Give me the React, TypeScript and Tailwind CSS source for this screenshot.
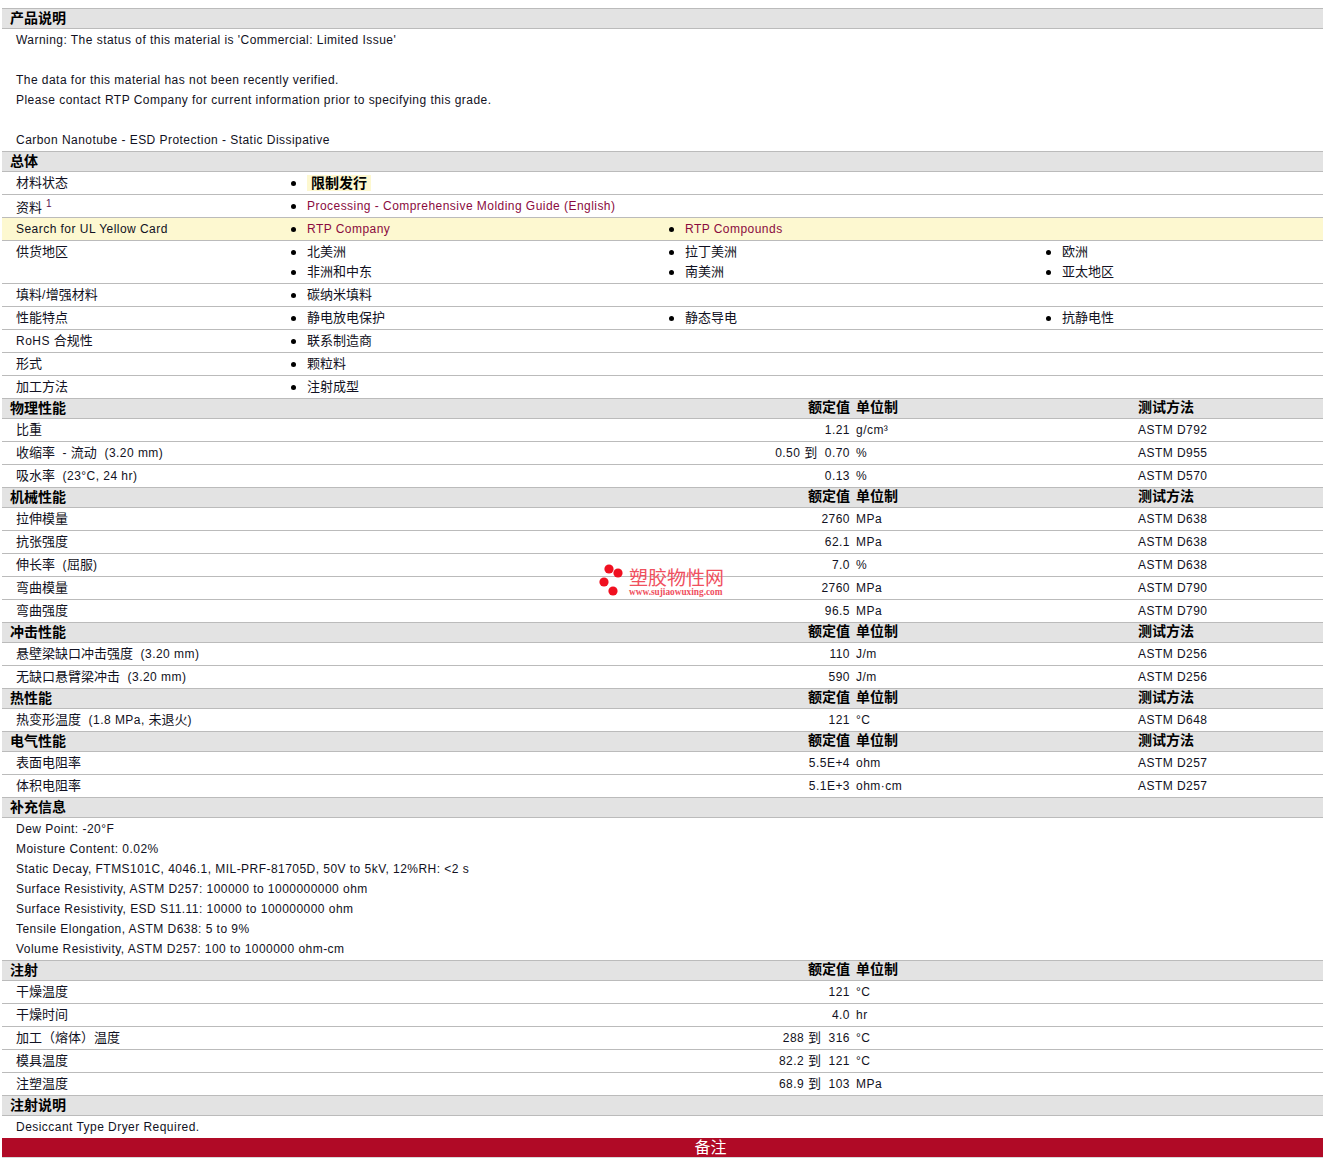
const font = "font-['Liberation_Sans','Noto_Sans_CJK_SC',sans-serif]";

// CJK runs are a touch larger than the latin text around them
const Txt = ({ text }: { text: string }) => (
  <>
    {text.split(/([\u3000-\u9fff\uff00-\uffef]+)/).map((part, i) =>
      i % 2 ? (
        <span key={i} className="text-[13px] tracking-normal">{part}</span>
      ) : (
        <span key={i}>{part}</span>
      )
    )}
  </>
);

const Header = ({ title, cols }: { title: string; cols?: boolean }) => (
  <div className="flex h-[20px] items-center border-b border-[#bbbbbb] bg-[#e3e3e3] text-[14px] font-bold text-black">
    <div className="flex-1 pb-[1px] pl-[8px]">{title}</div>
    {cols && (
      <>
        <div className="w-[200px] pb-[2px] text-right">额定值</div>
        <div className="w-[288px] pb-[2px] pl-[6px]">单位制</div>
        <div className="w-[185px] pb-[2px]">测试方法</div>
      </>
    )}
  </div>
);

const Lines = ({ lines }: { lines: string[] }) => (
  <div className="border-b border-[#bbbbbb] py-[1px] pl-[14px] tracking-[0.46px]">
    {lines.map((l, i) => (
      <div key={i} className="h-[20px] leading-[20px]">{l || "\u00a0"}</div>
    ))}
  </div>
);

const Item = ({ text, link }: { text: string; link?: boolean }) => (
  <div className="flex items-center">
    <span className="ml-[2px] mr-[11px] h-[5px] w-[5px] rounded-full bg-black" />
    <span className={link ? "text-[#8a0b3e]" : ""}><Txt text={text} /></span>
  </div>
);

const ListRow = ({ label, items, link, sup, yellow }: { label: string; items: string[]; link?: boolean; sup?: boolean; yellow?: boolean }) => (
  <div className={`grid h-[23px] grid-cols-[273px_378px_377px_1fr] items-center border-b border-[#bbbbbb] pl-[14px] tracking-[0.46px] ${yellow ? "bg-[#fdf8d0]" : ""}`}>
    <div className={sup ? "pt-[3px]" : ""}>
      <Txt text={label} />
      {sup && <sup className="ml-[4px] text-[10px] text-[#5a1050]">1</sup>}
    </div>
    {items.map((t) => (
      <Item key={t} text={t} link={link} />
    ))}
  </div>
);

const DataRow = ({ label, value, unit, test }: { label: string; value: string; unit: string; test?: string }) => (
  <div className="flex h-[23px] items-center whitespace-pre border-b border-[#bbbbbb] tracking-[0.46px]">
    <div className={`flex-1 pl-[14px] ${/[a-z(]/i.test(label) ? "" : "pb-[1px]"}`}><Txt text={label} /></div>
    <div className="w-[200px] text-right"><Txt text={value} /></div>
    <div className="w-[288px] pl-[6px]">{unit}</div>
    <div className="w-[185px]">{test}</div>
  </div>
);

export default function App() {
  return (
    <div className={`${font} relative min-h-[1161px] bg-white pl-[2px] pt-[8px] text-[12px] text-[#111122]`}>
      <div className="border-t border-[#bbbbbb]">
        <Header title="产品说明" />
        <Lines
          lines={[
            "Warning: The status of this material is 'Commercial: Limited Issue'",
            "",
            "The data for this material has not been recently verified.",
            "Please contact RTP Company for current information prior to specifying this grade.",
            "",
            "Carbon Nanotube - ESD Protection - Static Dissipative",
          ]}
        />
        <Header title="总体" />
        <div className="grid h-[23px] grid-cols-[273px_1fr] items-center border-b border-[#bbbbbb] pl-[14px]">
          <div className="text-[13px]">材料状态</div>
          <div className="flex items-center">
            <span className="ml-[2px] mr-[11px] h-[5px] w-[5px] rounded-full bg-black" />
            <span className="bg-[#fdf8d0] px-[4px] text-[14px] font-bold leading-[16px] text-black">限制发行</span>
          </div>
        </div>
        <ListRow label="资料" sup link items={["Processing - Comprehensive Molding Guide (English)"]} />
        <ListRow label="Search for UL Yellow Card" yellow link items={["RTP Company", "RTP Compounds"]} />
        <div className="grid h-[43px] grid-cols-[273px_378px_377px_1fr] grid-rows-[20px_20px] content-center items-center border-b border-[#bbbbbb] pl-[14px]">
          <div className="text-[13px]">供货地区</div>
          <Item text="北美洲" />
          <Item text="拉丁美洲" />
          <Item text="欧洲" />
          <div className="col-start-2"><Item text="非洲和中东" /></div>
          <Item text="南美洲" />
          <Item text="亚太地区" />
        </div>
        <ListRow label="填料/增强材料" items={["碳纳米填料"]} />
        <ListRow label="性能特点" items={["静电放电保护", "静态导电", "抗静电性"]} />
        <ListRow label="RoHS 合规性" items={["联系制造商"]} />
        <ListRow label="形式" items={["颗粒料"]} />
        <ListRow label="加工方法" items={["注射成型"]} />

        <Header title="物理性能" cols />
        <DataRow label="比重" value="1.21" unit="g/cm³" test="ASTM D792" />
        <DataRow label="收缩率  - 流动  (3.20 mm)" value="0.50 到  0.70" unit="%" test="ASTM D955" />
        <DataRow label="吸水率  (23°C, 24 hr)" value="0.13" unit="%" test="ASTM D570" />

        <Header title="机械性能" cols />
        <DataRow label="拉伸模量" value="2760" unit="MPa" test="ASTM D638" />
        <DataRow label="抗张强度" value="62.1" unit="MPa" test="ASTM D638" />
        <DataRow label="伸长率  (屈服)" value="7.0" unit="%" test="ASTM D638" />
        <DataRow label="弯曲模量" value="2760" unit="MPa" test="ASTM D790" />
        <DataRow label="弯曲强度" value="96.5" unit="MPa" test="ASTM D790" />

        <Header title="冲击性能" cols />
        <DataRow label="悬壁梁缺口冲击强度  (3.20 mm)" value="110" unit="J/m" test="ASTM D256" />
        <DataRow label="无缺口悬臂梁冲击  (3.20 mm)" value="590" unit="J/m" test="ASTM D256" />

        <Header title="热性能" cols />
        <DataRow label="热变形温度  (1.8 MPa, 未退火)" value="121" unit="°C" test="ASTM D648" />

        <Header title="电气性能" cols />
        <DataRow label="表面电阻率" value="5.5E+4" unit="ohm" test="ASTM D257" />
        <DataRow label="体积电阻率" value="5.1E+3" unit="ohm·cm" test="ASTM D257" />

        <Header title="补充信息" />
        <Lines
          lines={[
            "Dew Point: -20°F",
            "Moisture Content: 0.02%",
            "Static Decay, FTMS101C, 4046.1, MIL-PRF-81705D, 50V to 5kV, 12%RH: <2 s",
            "Surface Resistivity, ASTM D257: 100000 to 1000000000 ohm",
            "Surface Resistivity, ESD S11.11: 10000 to 100000000 ohm",
            "Tensile Elongation, ASTM D638: 5 to 9%",
            "Volume Resistivity, ASTM D257: 100 to 1000000 ohm-cm",
          ]}
        />

        <div className="flex h-[20px] items-center border-b border-[#bbbbbb] bg-[#e3e3e3] text-[14px] font-bold text-black">
          <div className="flex-1 pb-[1px] pl-[8px]">注射</div>
          <div className="w-[200px] pb-[2px] text-right">额定值</div>
          <div className="w-[473px] pb-[2px] pl-[6px]">单位制</div>
        </div>
        <DataRow label="干燥温度" value="121" unit="°C" />
        <DataRow label="干燥时间" value="4.0" unit="hr" />
        <DataRow label="加工（熔体）温度" value="288 到  316" unit="°C" />
        <DataRow label="模具温度" value="82.2 到  121" unit="°C" />
        <DataRow label="注塑温度" value="68.9 到  103" unit="MPa" />

        <Header title="注射说明" />
        <div className="flex h-[22px] items-center pl-[14px] tracking-[0.46px]">Desiccant Type Dryer Required.</div>
        <div className="flex h-[20px] items-center justify-center border-b border-[#d8d8d8] bg-[#b00a26] pl-[96px] text-[16px] text-white">备注</div>
      </div>

      <div className="absolute left-[598px] top-[563px] flex items-start gap-[5px]">
        <svg width="26" height="34" viewBox="0 0 26 34">
          <circle cx="11" cy="6" r="4.6" fill="#f01020" />
          <circle cx="20" cy="10" r="4.6" fill="#f01020" />
          <circle cx="6" cy="19" r="4.6" fill="#f01020" />
          <circle cx="15" cy="28" r="4.6" fill="#f01020" />
        </svg>
        <div className="mt-[6px]">
          <div className="text-[19px] leading-[20px] text-[#f0505e]">塑胶物性网</div>
          <div className="-mt-[2px] font-['Liberation_Serif',serif] text-[9.3px] font-bold leading-[10px] text-[#f0505e]">www.sujiaowuxing.com</div>
        </div>
      </div>
    </div>
  );
}
